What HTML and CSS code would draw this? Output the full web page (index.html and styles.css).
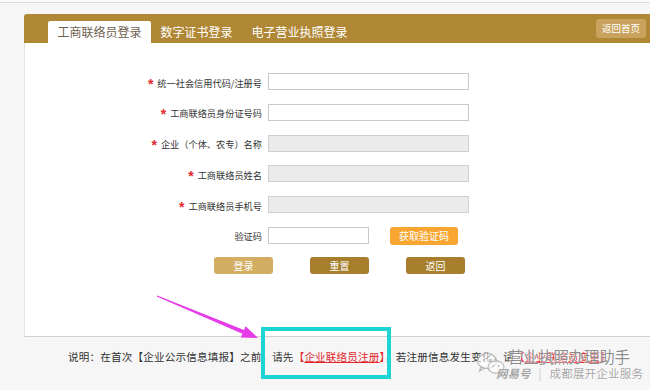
FILE: index.html
```html
<!DOCTYPE html>
<html lang="zh-CN">
<head>
<meta charset="utf-8">
<title>工商联络员登录</title>
<link rel="stylesheet" href="styles.css">
</head>
<body>
<div class="topline"></div>
<div class="panel">
  <div class="panel-head">
    <div class="tabs">
      <div class="tab active">工商联络员登录</div>
      <div class="tab">数字证书登录</div>
      <div class="tab">电子营业执照登录</div>
    </div>
    <div class="home-btn">返回首页</div>
  </div>
  <div class="panel-body">
    <div class="form">
      <div class="row">
        <div class="label"><span class="star">*</span>统一社会信用代码/注册号</div>
        <div class="input"></div>
      </div>
      <div class="row">
        <div class="label"><span class="star">*</span>工商联络员身份证号码</div>
        <div class="input"></div>
      </div>
      <div class="row">
        <div class="label"><span class="star">*</span>企业（个体、农专）名称</div>
        <div class="input disabled"></div>
      </div>
      <div class="row">
        <div class="label"><span class="star">*</span>工商联络员姓名</div>
        <div class="input disabled"></div>
      </div>
      <div class="row">
        <div class="label"><span class="star">*</span>工商联络员手机号</div>
        <div class="input disabled"></div>
      </div>
      <div class="row code-row">
        <div class="label">验证码</div>
        <div class="input short"></div>
        <div class="code-btn">获取验证码</div>
      </div>
      <div class="actions">
        <div class="btn light">登录</div>
        <div class="btn dark">重置</div>
        <div class="btn dark">返回</div>
      </div>
    </div>
  </div>
</div>
<div class="footer">说明：在首次【企业公示信息填报】之前，请先<span class="red">【<span class="link">企业联络员注册</span>】</span>，若注册信息发生变化，请<span class="red">【<span class="link">企业联络员变更</span>】</span></div>

<svg class="arrow" width="650" height="390" viewBox="0 0 650 390">
  <polygon points="157.3,295.4 244,330.1 245.6,326.2 258,338 240.8,337.6 242.4,333.7 156.7,296.6" fill="#e53be8"/>
</svg>
<div class="highlight"></div>

<div class="watermark">
  <svg class="wm-icon" width="30" height="24" viewBox="0 0 30 24">
    <ellipse cx="11" cy="9" rx="9.5" ry="7.5" fill="rgba(255,255,255,0.6)" stroke="#b5b5b5" stroke-width="1.2"/>
    <path d="M5 15 L3.5 19 L8.5 16" fill="none" stroke="#b5b5b5" stroke-width="1.2"/>
    <ellipse cx="20" cy="15" rx="8" ry="6.2" fill="rgba(255,255,255,0.6)" stroke="#b5b5b5" stroke-width="1.2"/>
    <path d="M24 20 L26 23 L21 21" fill="none" stroke="#b5b5b5" stroke-width="1.2"/>
    <circle cx="8" cy="8" r="1" fill="#b5b5b5"/>
    <circle cx="14" cy="8" r="1" fill="#b5b5b5"/>
    <circle cx="17.5" cy="14" r="0.9" fill="#b5b5b5"/>
    <circle cx="22.5" cy="14" r="0.9" fill="#b5b5b5"/>
  </svg>
  <div class="wm-text">
    <div class="wm-title">营业执照办理助手</div>
    <div class="wm-sub"><span class="wm-brand">网易号</span><span class="wm-sep">|</span><span class="wm-org">成都展开企业服务</span></div>
  </div>
</div>
</body>
</html>
```

FILE: styles.css
```css
html, body {
  margin: 0;
  padding: 0;
}
body {
  width: 650px;
  height: 390px;
  overflow: hidden;
  background: #f6f6f6;
  font-family: "Noto Sans CJK SC", "Noto Sans", sans-serif;
  color: #333;
  position: relative;
}
.topline {
  height: 2px;
  background: #fbfbfb;
  border-bottom: 1px solid #dcdcdc;
}
.panel {
  margin-top: 11px;
  margin-left: 24px;
  background: #fff;
  border-left: 1px solid #e2e2e2;
  border-bottom: 1px solid #cfcfcf;
  border-radius: 3px 0 0 0;
}
.panel-head {
  height: 29px;
  background: #af8735;
  display: flex;
  align-items: center;
  justify-content: space-between;
  border-radius: 3px 0 0 0;
  margin-left: -1px;
}
.tabs {
  display: flex;
  align-self: flex-end;
  padding-left: 24px;
}
.tab {
  height: 22px;
  line-height: 22px;
  padding: 0 9.5px;
  font-size: 12px;
  color: #fff;
}
.tab.active {
  background: #fff;
  color: #6e6150;
  border-radius: 2px 2px 0 0;
}
.home-btn {
  width: 50px;
  height: 19px;
  line-height: 19px;
  text-align: center;
  font-size: 9.5px;
  color: #fff;
  background: #c9a35d;
  border-radius: 3px;
  margin-right: 4px;
}
.panel-body {
  height: 293px;
  box-sizing: border-box;
  padding-top: 30px;
}
.form {
  display: flex;
  flex-direction: column;
  gap: 13.8px;
  padding-left: 87px;
}
.row {
  display: flex;
  align-items: center;
  height: 17px;
}
.label {
  width: 150px;
  text-align: right;
  font-size: 9.2px;
  color: #333;
  margin-right: 6px;
  white-space: nowrap;
}
.star {
  color: #e3282f;
  font-size: 14px;
  font-weight: bold;
  margin-right: 4px;
  position: relative;
  top: 2px;
  font-family: "Liberation Sans", sans-serif;
}
.input {
  width: 201px;
  height: 17px;
  box-sizing: border-box;
  border: 1px solid #c9c9c9;
  background: #fff;
}
.input.disabled {
  background: #ebebeb;
  border-color: #cfcfcf;
}
.code-row {
  height: 18px;
}
.input.short {
  width: 101px;
}
.code-btn {
  margin-left: 21px;
  width: 68px;
  height: 18px;
  line-height: 18px;
  text-align: center;
  background: #f8a631;
  color: #fff;
  font-size: 10px;
  border-radius: 3px;
}
.actions {
  display: flex;
  gap: 37px;
  padding-left: 102px;
  margin-top: -2px;
}
.btn {
  width: 59px;
  height: 17px;
  line-height: 17px;
  text-align: center;
  color: #fff;
  font-size: 10px;
  border-radius: 3px;
}
.btn.light {
  background: #d3ad62;
}
.btn.dark {
  background: #a67e2c;
}
.footer {
  padding-left: 68px;
  padding-top: 13px;
  font-size: 10.6px;
  letter-spacing: 0.15px;
  line-height: 14px;
  color: #333;
  white-space: nowrap;
}
.red {
  color: #e2262c;
}
.link {
  text-decoration: underline;
}
.arrow {
  position: absolute;
  left: 0;
  top: 0;
  pointer-events: none;
}
.highlight {
  position: absolute;
  left: 261px;
  top: 327px;
  width: 130px;
  height: 52px;
  box-sizing: border-box;
  border: 4px solid #1cd4d2;
}
.watermark {
  position: absolute;
  left: 476px;
  top: 346px;
  display: flex;
  align-items: flex-start;
  gap: 2px;
}
.wm-icon {
  margin-top: 6px;
}
.wm-text {
  display: flex;
  flex-direction: column;
}
.wm-title {
  font-size: 15.5px;
  line-height: 20px;
  color: rgba(120, 120, 120, 0.85);
  text-shadow: 0 0 2px #fff, 0 0 1px #fff;
  letter-spacing: -0.3px;
}
.wm-sub {
  display: flex;
  align-items: center;
  font-size: 11px;
  line-height: 15px;
  color: rgba(150, 150, 150, 0.85);
  margin-left: -12px;
  text-shadow: 0 0 2px #fff;
}
.wm-brand {
  font-style: italic;
  font-weight: bold;
  font-size: 11.5px;
}
.wm-sep {
  margin: 0 8px;
  color: #c2c2c2;
}
.wm-org {
  font-family: "Noto Sans CJK SC", serif;
  font-size: 11.5px;
  letter-spacing: 0.2px;
}
```
